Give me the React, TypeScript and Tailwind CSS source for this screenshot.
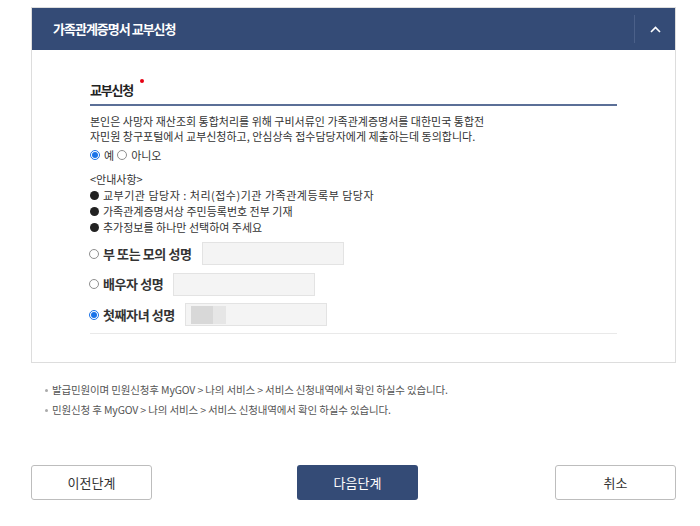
const font = { fontFamily: '"Noto Sans CJK KR", "Noto Sans", sans-serif' };

function Radio({ checked }: { checked?: boolean }) {
  return checked ? (
    <span className="flex h-[10px] w-[10px] shrink-0 items-center justify-center rounded-full border border-[#1a73e8] bg-white">
      <span className="h-[6px] w-[6px] rounded-full bg-[#1a73e8]" />
    </span>
  ) : (
    <span className="block h-[10px] w-[10px] shrink-0 rounded-full border border-[#8f8f8f] bg-white" />
  );
}

function NameRow({ label, checked, masked }: { label: string; checked?: boolean; masked?: boolean }) {
  return (
    <div className="flex h-[23px] items-center">
      <div className="ml-[-1px] flex items-center gap-[4px]">
        <Radio checked={checked} />
        <span className="text-[13px] font-bold tracking-[-0.4px] text-[#333]">{label}</span>
      </div>
      <div className="ml-[10px] flex h-[23px] w-[142px] items-center border border-[#e3e3e3] bg-[#f4f4f4] pl-[5px]">
        {masked && (
          <div className="flex h-[18px]">
            <div className="w-[22px] bg-[#d8d8d8]" />
            <div className="w-[13px] bg-[#e6e6e6]" />
          </div>
        )}
      </div>
    </div>
  );
}

export default function App() {
  const bullets = [
    "교부기관 담당자 : 처리(접수)기관 가족관계등록부 담당자",
    "가족관계증명서상 주민등록번호 전부 기재",
    "추가정보를 하나만 선택하여 주세요",
  ];

  return (
    <div className="h-[526px] w-[700px] overflow-hidden bg-white pl-[31px] pr-[24px] pt-[7px]" style={font}>
      {/* panel */}
      <div className="border border-[#dddddd]">
        <div className="flex h-[42px] items-center bg-[#344b76]">
          <h2 className="flex-1 pl-[21px] text-[13px] font-bold tracking-[-1px] text-white">가족관계증명서 교부신청</h2>
          <div className="h-[28px] w-px bg-[#4b6089]" />
          <div className="flex w-[40px] items-center justify-center">
            <svg width="11" height="7" viewBox="0 0 11 7" fill="none">
              <path d="M1 6L5.5 1.5L10 6" stroke="white" strokeWidth="1.6" />
            </svg>
          </div>
        </div>

        <div className="px-[58px] pb-[28px] pt-[30px]">
          <div className="border-b-2 border-[#5b6f97] pb-[4px]">
            <div className="flex items-start">
              <span className="text-[13px] leading-[20px] font-bold tracking-[-1.2px] text-[#222]">교부신청</span>
              <span className="ml-[7px] mt-[-1px] h-[4px] w-[4px] rounded-full bg-[#e60012]" />
            </div>
          </div>

          <p className="mt-[8px] text-[11px] leading-[15px] text-[#333]">
            본인은 사망자 재산조회 통합처리를 위해 구비서류인 가족관계증명서를 대한민국 통합전
            <br />
            자민원 창구포털에서 교부신청하고, 안심상속 접수담당자에게 제출하는데 동의합니다.
          </p>

          <div className="mt-[3px] flex h-[16px] items-center text-[11px] text-[#333]">
            <Radio checked />
            <span className="ml-[4px]">예</span>
            <span className="ml-[3px] flex">
              <Radio />
            </span>
            <span className="ml-[4px]">아니오</span>
          </div>

          <div className="mt-[8px] text-[11px] leading-[16px] text-[#333]">
            <div>&lt;안내사항&gt;</div>
            {bullets.map((b, i) => (
              <div key={b} className="flex items-center">
                <span className="mr-[4px] h-[9px] w-[9px] rounded-full bg-[#222]" />
                <span className={i === 0 ? "tracking-[0.5px]" : ""}>{b}</span>
              </div>
            ))}
          </div>

          <div className="mt-[7px] flex flex-col gap-[7.5px]">
            <NameRow label="부 또는 모의 성명" />
            <NameRow label="배우자 성명" />
            <NameRow label="첫째자녀 성명" checked masked />
          </div>

          <div className="mt-[7px] border-t border-[#e9e9e9]" />
        </div>
      </div>

      {/* notes */}
      <ul className="mt-[17px] pl-[14px] text-[10.5px] leading-[20px] tracking-[-0.15px] text-[#555]">
        <li className="flex items-center">
          <span className="mr-[4px] h-[3px] w-[3px] rounded-full bg-[#aaa]" />
          발급민원이며 민원신청후 MyGOV &gt; 나의 서비스 &gt; 서비스 신청내역에서 확인 하실수 있습니다.
        </li>
        <li className="flex items-center">
          <span className="mr-[4px] h-[3px] w-[3px] rounded-full bg-[#aaa]" />
          민원신청 후 MyGOV &gt; 나의 서비스 &gt; 서비스 신청내역에서 확인 하실수 있습니다.
        </li>
      </ul>

      {/* buttons */}
      <div className="mt-[45px] flex">
        <button className="h-[35px] w-[121px] rounded-[3px] border border-[#bdbdbd] bg-white text-[13px] text-[#333]">
          이전단계
        </button>
        <button className="ml-[145px] h-[35px] w-[121px] rounded-[3px] bg-[#344b76] text-[13px] text-white">
          다음단계
        </button>
        <button className="ml-auto h-[35px] w-[121px] rounded-[3px] border border-[#bdbdbd] bg-white text-[13px] text-[#333]">
          취소
        </button>
      </div>
    </div>
  );
}
